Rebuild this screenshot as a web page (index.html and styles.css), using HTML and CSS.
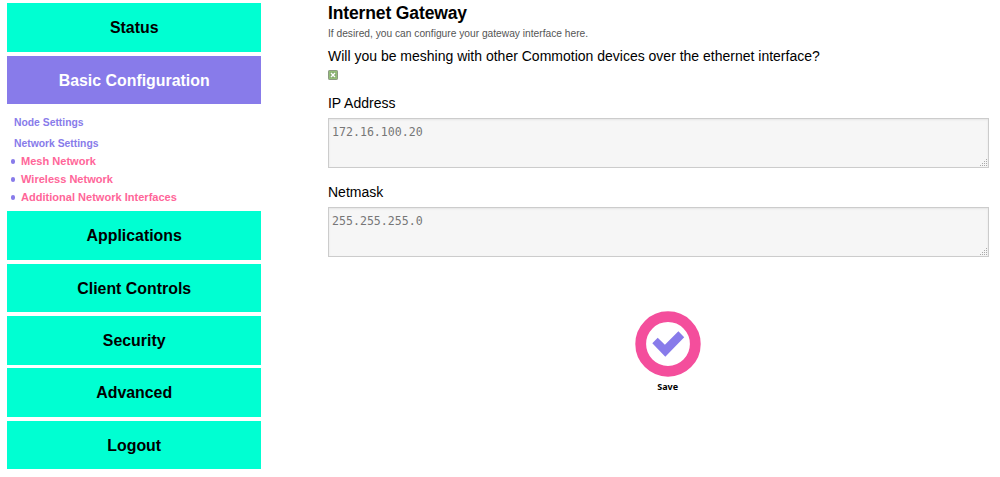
FILE: index.html
```html
<!DOCTYPE html>
<html lang="en">
<head>
<meta charset="utf-8">
<title>Internet Gateway</title>
<link rel="stylesheet" href="styles.css">
</head>
<body>
<div class="page">
  <nav class="sidebar">
    <a class="nav-item">Status</a>
    <a class="nav-item active">Basic Configuration</a>
    <div class="submenu">
      <a class="section">Node Settings</a>
      <a class="section">Network Settings</a>
      <ul class="links">
        <li><span>Mesh Network</span></li>
        <li><span>Wireless Network</span></li>
        <li><span>Additional Network Interfaces</span></li>
      </ul>
    </div>
    <a class="nav-item">Applications</a>
    <a class="nav-item">Client Controls</a>
    <a class="nav-item">Security</a>
    <a class="nav-item">Advanced</a>
    <a class="nav-item">Logout</a>
  </nav>
  <main class="content">
    <h1>Internet Gateway</h1>
    <p class="hint">If desired, you can configure your gateway interface here.</p>
    <p class="question">Will you be meshing with other Commotion devices over the ethernet interface?</p>
    <svg class="check" width="10" height="10" viewBox="0 0 10 10"><rect x=".5" y=".5" width="9" height="9" rx=".7" fill="#94bd78" stroke="#8c9983"/><rect x="2.5" y="2.5" width="5" height="5" fill="#759a60"/><path d="M3 3l4 4M7 3l-4 4" stroke="#fff" stroke-width="1.5"/></svg>
    <label class="label ip">IP Address</label>
    <div class="field">172.16.100.20<svg class="grip" width="8" height="8" viewBox="0 0 8 8"><path d="M6 0h1v1h-1zM4 2h1v1h-1zM6 2h1v1h-1zM2 4h1v1h-1zM4 4h1v1h-1zM6 4h1v1h-1zM0 6h1v1h-1zM2 6h1v1h-1zM4 6h1v1h-1zM6 6h1v1h-1z"/></svg></div>
    <label class="label mask">Netmask</label>
    <div class="field">255.255.255.0<svg class="grip" width="8" height="8" viewBox="0 0 8 8"><path d="M6 0h1v1h-1zM4 2h1v1h-1zM6 2h1v1h-1zM2 4h1v1h-1zM4 4h1v1h-1zM6 4h1v1h-1zM0 6h1v1h-1zM2 6h1v1h-1zM4 6h1v1h-1zM6 6h1v1h-1z"/></svg></div>
    <div class="save">
      <svg width="66" height="66" viewBox="0 0 66 66"><circle cx="33" cy="33" r="27.3" fill="#fff" stroke="#f44e9c" stroke-width="10.8"/><path d="M17.3 32.2l5.4-5.5 7.2 7L43.4 20.3l5.8 5.9L30.3 45.8z" fill="#887bea"/></svg>
      <span>Save</span>
    </div>
  </main>
</div>
</body>
</html>
```
FILE: styles.css
```css
body {
  margin: 0;
  background: #fff;
  color: #000;
  font-family: "Liberation Sans", Arial, sans-serif;
}

.page {
  display: flex;
  height: 477px;
  overflow: hidden;
}

.sidebar {
  width: 254.4px;
  margin: 3.4px 0 0 7px;
}

.nav-item {
  display: block;
  height: 48.7px;
  margin-bottom: 3.65px;
  line-height: 50.4px;
  background: #00ffd2;
  font-size: 15.9px;
  font-weight: bold;
  text-align: center;
}

.nav-item.active {
  background: #887bea;
  color: #fff;
  margin-bottom: 0;
}

.submenu {
  height: 106.8px;
  box-sizing: border-box;
  padding-top: 7.6px;
  font-weight: bold;
}

.section {
  display: block;
  height: 21px;
  padding-left: 7px;
  line-height: 21px;
  font-size: 10.35px;
  color: #887bea;
}

.links {
  list-style: none;
  margin: -2.3px 0 0;
  padding: 0;
}

.links li {
  display: flex;
  align-items: center;
  height: 18.1px;
  padding-left: 3.6px;
  font-size: 11.05px;
  color: #ff6699;
}

.links li::before {
  content: "";
  width: 4.5px;
  height: 4.5px;
  margin: 1px 5.9px 0 0;
  border-radius: 50%;
  background: #887bea;
}

.content {
  display: flex;
  flex-direction: column;
  width: 661px;
  margin-left: 66.6px;
}

h1 {
  margin: 2px 0 0;
  height: 22px;
  line-height: 22px;
  font-size: 17.5px;
  letter-spacing: -0.13px;
}

.hint {
  margin: 2px 0 0;
  height: 16px;
  line-height: 16px;
  font-size: 10.22px;
  color: #555;
}

.question {
  margin: 4px 0 0;
  height: 21px;
  line-height: 20px;
  font-size: 14px;
}

.check {
  margin: 3px 0 0;
}

.label {
  height: 20px;
  line-height: 20px;
  font-size: 14px;
}

.ip { margin-top: 13px; }
.mask { margin-top: 14px; }

.field {
  position: relative;
  box-sizing: border-box;
  height: 50px;
  margin-top: 5px;
  padding: 5px 3px;
  border: 1px solid #ccc;
  background: #f6f6f6;
  box-shadow: inset 0 1px 2px #e4e4e4;
  color: #777;
  font: 11.6px/17px "DejaVu Sans Mono", monospace;
}

.grip {
  position: absolute;
  right: 0;
  bottom: 0;
  fill: #aaa;
}

.save {
  display: flex;
  flex-direction: column;
  align-items: center;
  margin: 54px 0 0 18.4px;
  font: bold 9px/12px "Noto Sans", sans-serif;
}

.save span { margin-top: 4px; }
```
